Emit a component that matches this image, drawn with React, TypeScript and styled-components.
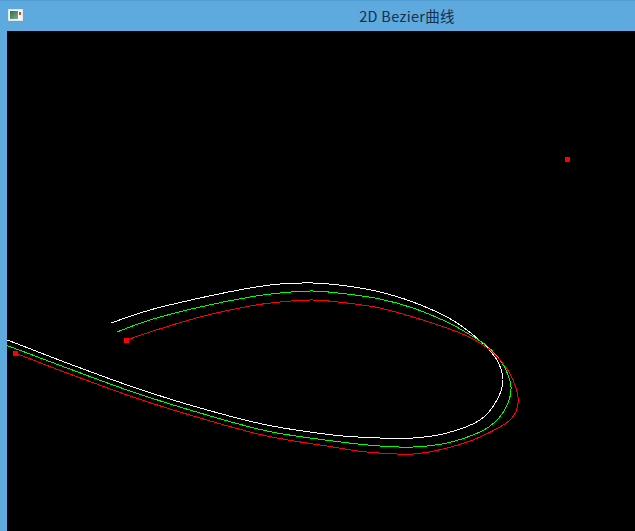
import React from "react";
import styled, { createGlobalStyle } from "styled-components";

type Pt = [number, number];

const GlobalStyle = createGlobalStyle`
  html, body {
    margin: 0;
    padding: 0;
    background: #5ea9dd;
    overflow: hidden;
  }
`;

// sampled from the reference, in page coordinates
const whiteCurve: Pt[] = [
  [-6, 337], [7, 340], [67, 363], [133, 387], [200, 408], [267, 425], [333, 435],
  [380, 438], [413, 438], [447, 433], [480, 420], [497, 400], [503, 380],
  [498, 362], [487, 347], [480, 341], [467, 330], [447, 317], [413, 302],
  [380, 292], [347, 286], [313, 283], [280, 284], [250, 288], [200, 298],
  [150, 310], [111, 323],
];

const greenCurve: Pt[] = [
  [-6, 343], [8, 346], [67, 368], [133, 392], [200, 413], [267, 431], [333, 441],
  [380, 446], [413, 447], [447, 443], [480, 432], [497, 420], [508, 403],
  [511, 387], [506, 370], [496, 355], [487, 346], [480, 341], [467, 333],
  [447, 322], [413, 308], [380, 299], [347, 294], [313, 291], [280, 293],
  [250, 297], [200, 307], [150, 320], [117, 332],
];

const redCurve: Pt[] = [
  [15, 353], [67, 373], [133, 397], [200, 418], [267, 436], [333, 447],
  [367, 452], [413, 454], [447, 448], [480, 437], [510, 420], [518, 403],
  [515, 385], [505, 366], [491, 351], [480, 343], [467, 336], [447, 328],
  [413, 317], [380, 308], [347, 303], [313, 300], [280, 302], [250, 306],
  [200, 317], [150, 332], [127, 340],
];

const controlPoints: Pt[] = [
  [15, 353],
  [126, 340],
  [567, 159],
];

const smoothPath = (pts: Pt[]) => {
  let d = `M${pts[0][0]},${pts[0][1]}`;
  for (let i = 0; i < pts.length - 1; i++) {
    const p0 = pts[i - 1] || pts[i];
    const p1 = pts[i];
    const p2 = pts[i + 1];
    const p3 = pts[i + 2] || p2;
    const c1x = p1[0] + (p2[0] - p0[0]) / 6;
    const c1y = p1[1] + (p2[1] - p0[1]) / 6;
    const c2x = p2[0] - (p3[0] - p1[0]) / 6;
    const c2y = p2[1] - (p3[1] - p1[1]) / 6;
    d += ` C${c1x.toFixed(1)},${c1y.toFixed(1)} ${c2x.toFixed(1)},${c2y.toFixed(1)} ${p2[0]},${p2[1]}`;
  }
  return d;
};

const AppIcon = () => (
  <svg width="15" height="12" viewBox="0 0 15 12">
    <defs>
      <linearGradient id="ico" x1="0" y1="0" x2="1" y2="1">
        <stop offset="0" stopColor="#2f6b4e" />
        <stop offset="1" stopColor="#7fae8e" />
      </linearGradient>
    </defs>
    <rect x="0.5" y="0.5" width="14" height="11" fill="#f4f7f6" stroke="#dfe7ea" />
    <rect x="2" y="2" width="8" height="8" fill="url(#ico)" />
    <rect x="11" y="3" width="2" height="3" fill="#c44a4a" />
  </svg>
);

const App = () => {
  return (
    <>
      <GlobalStyle />
      <Window>
        <TitleBar>
          <IconSlot>
            <AppIcon />
          </IconSlot>
          <Title>2D Bezier曲线</Title>
        </TitleBar>
        <Frame>
          <Canvas>
            <Plot
              width="628"
              height="500"
              viewBox="7 31 628 500"
              shapeRendering="crispEdges"
            >
              <path d={smoothPath(whiteCurve)} fill="none" stroke="#ffffff" strokeWidth="1" />
              <path d={smoothPath(greenCurve)} fill="none" stroke="#00ff00" strokeWidth="1" />
              <path d={smoothPath(redCurve)} fill="none" stroke="#ff0000" strokeWidth="1" />
              {controlPoints.map(([x, y]) => (
                <rect key={`${x}-${y}`} x={x - 2.5} y={y - 2.5} width="5" height="5" fill="#ff0000" />
              ))}
            </Plot>
          </Canvas>
        </Frame>
      </Window>
    </>
  );
};

const Window = styled.div`
  width: 100vw;
  height: 100vh;
  display: flex;
  flex-direction: column;
  background: #5ea9dd;
  border-top: 1px solid #4f9dd3;
  box-sizing: border-box;
`;

// the window is wider than the shot, so the title sits right of centre
const TitleBar = styled.div`
  position: relative;
  height: 30px;
  flex: none;
  display: flex;
  align-items: center;
  justify-content: center;
  padding-left: 179px;
  background: #5ea9dd;
`;

const IconSlot = styled.div`
  position: absolute;
  left: 8px;
  top: 8px;
  width: 15px;
  height: 12px;
  display: flex;
`;

const Title = styled.span`
  font-family: "Noto Sans CJK SC", "Noto Sans", sans-serif;
  font-size: 14.5px;
  color: #14304d;
  margin-top: -2px;
  letter-spacing: 0.3px;
`;

const Frame = styled.div`
  flex: 1;
  min-height: 0;
  display: flex;
  padding-left: 7px;
`;

const Canvas = styled.div`
  flex: 1;
  background: #000000;
  overflow: hidden;
  display: flex;
`;

const Plot = styled.svg`
  flex: none;
  display: block;
`;

export default App;
